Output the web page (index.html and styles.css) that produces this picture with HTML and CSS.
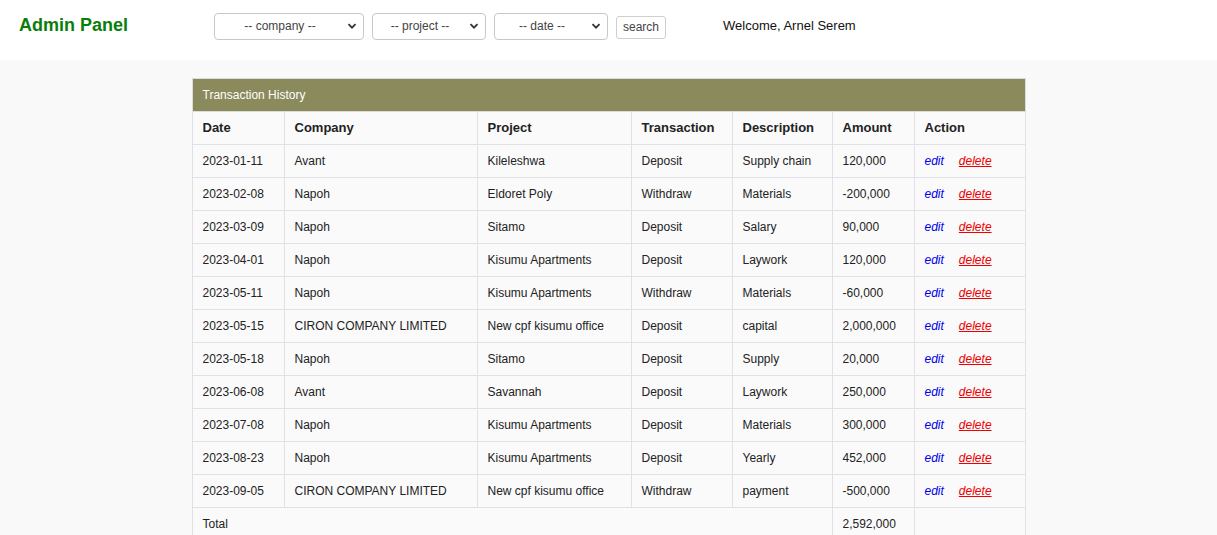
FILE: index.html
```html
<!DOCTYPE html>
<html lang="en">
<head>
<meta charset="utf-8">
<title>Admin Panel</title>
<link rel="stylesheet" href="styles.css">
</head>
<body>
<header class="topbar">
  <h1 class="brand">Admin Panel</h1>
  <form class="filters">
    <div class="select-wrap w-company">
      <select class="select"><option>-- company --</option></select>
      <svg class="chev" viewBox="0 0 10 10" width="10" height="10"><path d="M1.5 3.2 L5 6.7 L8.5 3.2" fill="none" stroke="#333" stroke-width="1.8"/></svg>
    </div>
    <div class="select-wrap w-project">
      <select class="select"><option>-- project --</option></select>
      <svg class="chev" viewBox="0 0 10 10" width="10" height="10"><path d="M1.5 3.2 L5 6.7 L8.5 3.2" fill="none" stroke="#333" stroke-width="1.8"/></svg>
    </div>
    <div class="select-wrap w-date">
      <select class="select"><option>-- date --</option></select>
      <svg class="chev" viewBox="0 0 10 10" width="10" height="10"><path d="M1.5 3.2 L5 6.7 L8.5 3.2" fill="none" stroke="#333" stroke-width="1.8"/></svg>
    </div>
    <button type="button" class="btn">search</button>
  </form>
  <div class="welcome">Welcome, Arnel Serem</div>
</header>
<main class="content">
  <table class="tx">
    <colgroup>
      <col class="c-date"><col class="c-company"><col class="c-project"><col class="c-trans"><col class="c-desc"><col class="c-amount"><col class="c-action">
    </colgroup>
    <thead>
      <tr><th colspan="7" class="caption">Transaction History</th></tr>
      <tr class="heads"><th>Date</th><th>Company</th><th>Project</th><th>Transaction</th><th>Description</th><th>Amount</th><th>Action</th></tr>
    </thead>
    <tbody>
      <tr><td>2023-01-11</td><td>Avant</td><td>Kileleshwa</td><td>Deposit</td><td>Supply chain</td><td>120,000</td><td><a class="edit">edit</a><a class="del">delete</a></td></tr>
      <tr><td>2023-02-08</td><td>Napoh</td><td>Eldoret Poly</td><td>Withdraw</td><td>Materials</td><td>-200,000</td><td><a class="edit">edit</a><a class="del">delete</a></td></tr>
      <tr><td>2023-03-09</td><td>Napoh</td><td>Sitamo</td><td>Deposit</td><td>Salary</td><td>90,000</td><td><a class="edit">edit</a><a class="del">delete</a></td></tr>
      <tr><td>2023-04-01</td><td>Napoh</td><td>Kisumu Apartments</td><td>Deposit</td><td>Laywork</td><td>120,000</td><td><a class="edit">edit</a><a class="del">delete</a></td></tr>
      <tr><td>2023-05-11</td><td>Napoh</td><td>Kisumu Apartments</td><td>Withdraw</td><td>Materials</td><td>-60,000</td><td><a class="edit">edit</a><a class="del">delete</a></td></tr>
      <tr><td>2023-05-15</td><td>CIRON COMPANY LIMITED</td><td>New cpf kisumu office</td><td>Deposit</td><td>capital</td><td>2,000,000</td><td><a class="edit">edit</a><a class="del">delete</a></td></tr>
      <tr><td>2023-05-18</td><td>Napoh</td><td>Sitamo</td><td>Deposit</td><td>Supply</td><td>20,000</td><td><a class="edit">edit</a><a class="del">delete</a></td></tr>
      <tr><td>2023-06-08</td><td>Avant</td><td>Savannah</td><td>Deposit</td><td>Laywork</td><td>250,000</td><td><a class="edit">edit</a><a class="del">delete</a></td></tr>
      <tr><td>2023-07-08</td><td>Napoh</td><td>Kisumu Apartments</td><td>Deposit</td><td>Materials</td><td>300,000</td><td><a class="edit">edit</a><a class="del">delete</a></td></tr>
      <tr><td>2023-08-23</td><td>Napoh</td><td>Kisumu Apartments</td><td>Deposit</td><td>Yearly</td><td>452,000</td><td><a class="edit">edit</a><a class="del">delete</a></td></tr>
      <tr><td>2023-09-05</td><td>CIRON COMPANY LIMITED</td><td>New cpf kisumu office</td><td>Withdraw</td><td>payment</td><td>-500,000</td><td><a class="edit">edit</a><a class="del">delete</a></td></tr>
      <tr><td colspan="5">Total</td><td>2,592,000</td><td></td></tr>
    </tbody>
  </table>
</main>
</body>
</html>
```
FILE: styles.css
```css
* { box-sizing: border-box; }
html, body { margin: 0; padding: 0; }
body {
  font-family: "Liberation Sans", Arial, sans-serif;
  background: #f9f9f9;
  color: #222;
}
.topbar {
  height: 60px;
  background: #fff;
  display: flex;
  align-items: center;
  padding-left: 19px;
}
.brand {
  margin: 0;
  width: 195px;
  font-size: 18px;
  font-weight: bold;
  color: #0a7d0a;
  position: relative;
  top: -5px;
}
.filters {
  display: flex;
  align-items: center;
  gap: 8px;
  margin: 0;
  position: relative;
  top: -4px;
}
.select-wrap { position: relative; height: 27px; }
.w-company { width: 150px; }
.w-project { width: 114px; }
.w-date { width: 114px; }
.select {
  appearance: none;
  -webkit-appearance: none;
  width: 100%;
  height: 27px;
  border: 1px solid #c8c8c8;
  border-radius: 4px;
  background: #fff;
  font-family: "Liberation Sans", Arial, sans-serif;
  font-size: 12px;
  color: #444;
  text-align: center;
  text-align-last: center;
  padding: 0 22px 0 4px;
}
.chev {
  position: absolute;
  right: 7px;
  top: 8px;
  pointer-events: none;
}
.btn {
  height: 23px;
  width: 50px;
  padding: 0;
  background: #fff;
  border: 1px solid #cfcfcf;
  border-radius: 3px;
  font-family: "Liberation Sans", Arial, sans-serif;
  font-size: 12px;
  color: #444;
  margin-top: 2px;
}
.welcome {
  margin-left: 57px;
  font-size: 13px;
  color: #111;
  position: relative;
  top: -5px;
}
.content {
  padding-top: 18px;
}
.tx {
  width: 833px;
  margin: 0 auto;
  border-collapse: collapse;
  table-layout: fixed;
  background: #fafafa;
  font-size: 12px;
}
.c-date { width: 92px; }
.c-company { width: 193px; }
.c-project { width: 154px; }
.c-trans { width: 101px; }
.c-desc { width: 100px; }
.c-amount { width: 82px; }
.c-action { width: 111px; }
.tx th, .tx td {
  border: 1px solid #e0e0e6;
  padding: 9px 10px;
  line-height: 14px;
  text-align: left;
  white-space: nowrap;
  color: #222;
}
.tx th.caption {
  background: #8b8a5c;
  color: #fff;
  font-weight: normal;
  font-size: 12px;
  border-color: #dcdcdc;
}
.heads th {
  font-size: 13px;
  font-weight: bold;
  color: #222;
}
.edit {
  color: #0000ee;
  font-style: italic;
  text-decoration: none;
  margin-right: 15px;
}
.del {
  color: #ee0000;
  font-style: italic;
  text-decoration: underline;
}
```
